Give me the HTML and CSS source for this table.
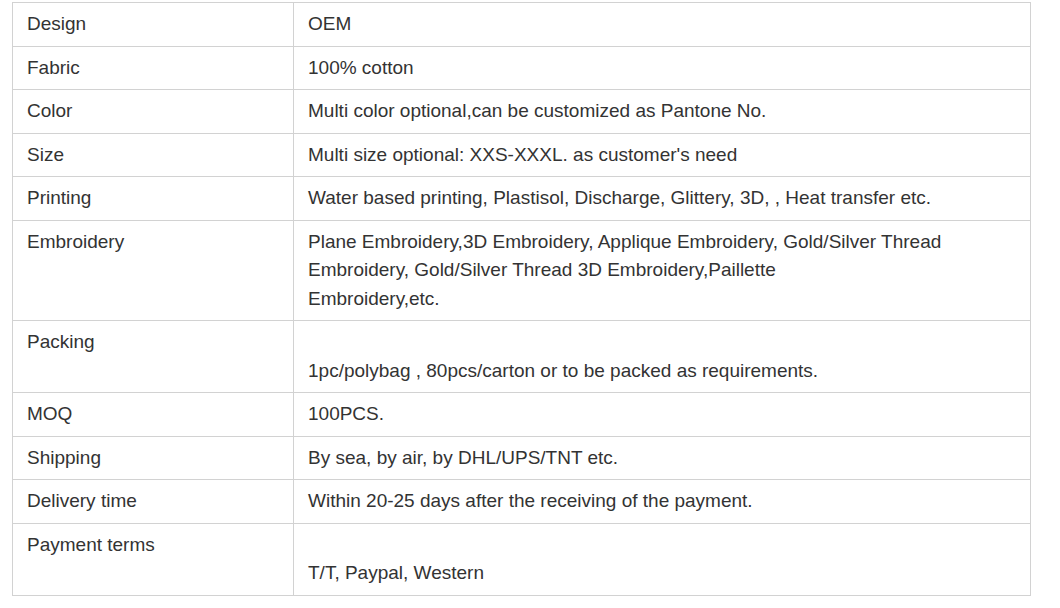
FILE: index.html
```html
<!DOCTYPE html>
<html>
<head>
<meta charset="utf-8">
<link rel="stylesheet" href="styles.css">
</head>
<body>
<table class="spec">
  <colgroup><col class="c-label"><col class="c-value"></colgroup>
  <tbody>
    <tr><td>Design</td><td>OEM</td></tr>
    <tr><td>Fabric</td><td>100% cotton</td></tr>
    <tr><td>Color</td><td>Multi color optional,can be customized as Pantone No.</td></tr>
    <tr><td>Size</td><td>Multi size optional: XXS-XXXL. as customer's need</td></tr>
    <tr><td>Printing</td><td>Water based printing, Plastisol, Discharge, Glittery, 3D, , Heat transfer etc.</td></tr>
    <tr><td>Embroidery</td><td>Plane Embroidery,3D Embroidery, Applique Embroidery, Gold/Silver Thread Embroidery, Gold/Silver Thread 3D Embroidery,Paillette<br>Embroidery,etc.</td></tr>
    <tr><td>Packing</td><td><br>1pc/polybag , 80pcs/carton or to be packed as requirements.</td></tr>
    <tr><td>MOQ</td><td>100PCS.</td></tr>
    <tr><td>Shipping</td><td>By sea, by air, by DHL/UPS/TNT etc.</td></tr>
    <tr><td>Delivery time</td><td>Within 20-25 days after the receiving of the payment.</td></tr>
    <tr><td>Payment terms</td><td><br>T/T, Paypal, Western</td></tr>
  </tbody>
</table>
</body>
</html>
```
FILE: styles.css
```css
html, body {
  margin: 0;
  padding: 0;
  background: #fff;
}
.spec {
  margin: 2px 0 0 12px;
  width: 1019px;
  border-collapse: collapse;
  table-layout: fixed;
  font-family: "Liberation Sans", Arial, sans-serif;
  font-size: 19px;
  color: #333;
}
.c-label { width: 281px; }
.spec td {
  border: 1px solid #d2d2d2;
  padding: 7px 14px;
  line-height: 28.5px;
  vertical-align: top;
  text-align: left;
}
```
